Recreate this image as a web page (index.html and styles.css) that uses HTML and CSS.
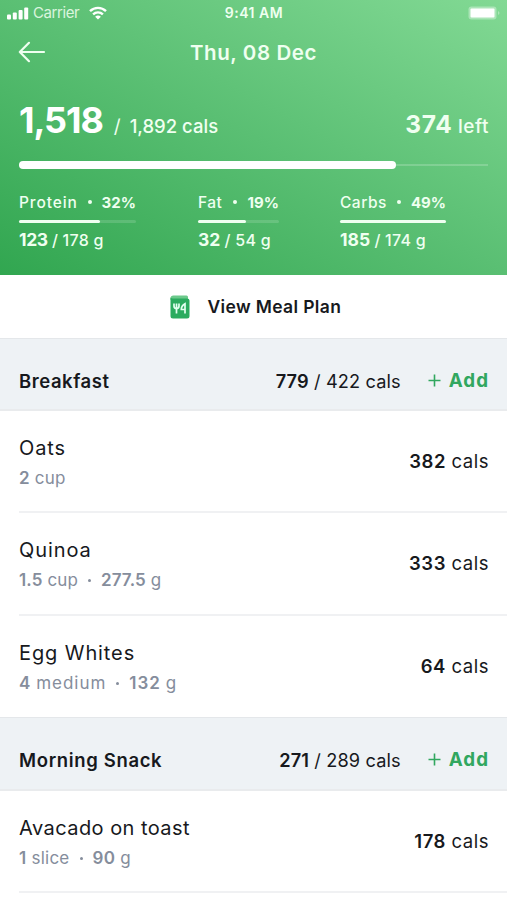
FILE: index.html
```html
<!DOCTYPE html>
<html lang="en">
<head>
<meta charset="utf-8">
<title>Food Diary</title>
<link rel="stylesheet" href="styles.css">
</head>
<body>
<header class="summary">
  <div class="status">
    <div class="status-left">
      <svg class="signal" width="22" height="14" viewBox="0 0 22 14"><rect x="0" y="8.5" width="4" height="5" rx="1"/><rect x="5.8" y="6.5" width="4" height="7" rx="1"/><rect x="11.6" y="4" width="4" height="9.5" rx="1"/><rect x="17.2" y="1.5" width="4" height="12" rx="1"/></svg>
      <span class="carrier">Carrier</span>
      <svg class="wifi" width="20" height="14" viewBox="0 0 20 14"><path d="M2 5.2C6.5.8 13.500.8 18 5.200" /><path d="M5.100 8.400C7.900 5.700 12.100 5.700 14.900 8.400"/><path class="wifi-dot" d="M10 13.500L7.100 10.700Q10 8.400 12.900 10.700Z"/></svg>
    </div>
    <span class="clock">9:41 AM</span>
    <svg class="battery" width="33" height="14" viewBox="0 0 33 14"><rect class="case" x="0.500" y="0.500" width="28" height="13" rx="3"/><rect class="charge" x="2.500" y="2.500" width="24" height="9" rx="1"/><path class="case" d="M30 5Q33 7 30 9Z"/></svg>
  </div>
  <div class="nav">
    <svg class="back" width="28" height="22" viewBox="0 0 28 22"><path d="M26 11H1.800M11 1.800L1.800 11L11 20.200"/></svg>
    <h1>Thu, 08 Dec</h1>
    <span class="nav-space"></span>
  </div>
  <div class="totals">
    <div class="eaten"><b>1,518</b><i>/</i><span>1,892 cals</span></div>
    <div class="left"><b>374</b> <span>left</span></div>
  </div>
  <div class="progress"><div class="progress-fill"></div></div>
  <div class="macros">
    <div class="macro protein">
      <div class="label"><span>Protein</span><i></i><b>32%</b></div>
      <div class="meter"><div></div></div>
      <div class="amount"><b>123</b> <span>/ 178 g</span></div>
    </div>
    <div class="macro fat">
      <div class="label"><span>Fat</span><i></i><b>19%</b></div>
      <div class="meter"><div></div></div>
      <div class="amount"><b>32</b> <span>/ 54 g</span></div>
    </div>
    <div class="macro carbs">
      <div class="label"><span>Carbs</span><i></i><b>49%</b></div>
      <div class="meter"><div></div></div>
      <div class="amount"><b>185</b> <span>/ 174 g</span></div>
    </div>
  </div>
</header>
<a class="plan">
  <svg width="20" height="24" viewBox="0 0 20 24"><path class="pages" d="M3.500.500H16.500Q18 .500 18 2V5H.500V3.500Q.500.500 3.500.500Z"/><path class="cover" d="M.500 2.500Q1 3.500 3 3.500H17Q19.500 3.500 19.500 5.500V21Q19.500 23.500 17 23.500H3Q.500 23.500.500 21Z"/><path class="cutlery" d="M4 8.500V11Q4 13.500 6.500 13.500Q9 13.500 9 11V8.500M6.500 8.500V18.500M15 18.500V8.800Q11.300 11 11.300 14.500H15"/></svg>
  <span>View Meal Plan</span>
</a>
<main>
  <section>
    <div class="meal-head"><h2>Breakfast</h2><div class="meal-total"><b>779</b> / 422 cals</div><a class="add"><svg width="13" height="13" viewBox="0 0 13 13"><path d="M6.500.500V12.500M.500 6.500H12.500"/></svg><span>Add</span></a></div>
    <div class="food"><div><h3 class="wide">Oats</h3><p><b>2</b> cup</p></div><div class="cals"><b>382</b> cals</div></div>
    <div class="food"><div><h3 class="wide">Quinoa</h3><p class="tight"><b>1.5</b> cup<i></i><b>277.5</b> g</p></div><div class="cals"><b>333</b> cals</div></div>
    <div class="food last"><div><h3 class="wide">Egg Whites</h3><p class="wide"><b>4</b> medium<i></i><b>132</b> g</p></div><div class="cals"><b>64</b> cals</div></div>
  </section>
  <section>
    <div class="meal-head"><h2 class="snack">Morning Snack</h2><div class="meal-total"><b>271</b> / 289 cals</div><a class="add"><svg width="13" height="13" viewBox="0 0 13 13"><path d="M6.500.500V12.500M.500 6.500H12.500"/></svg><span>Add</span></a></div>
    <div class="food"><div><h3>Avacado on toast</h3><p><b>1</b> slice<i></i><b>90</b> g</p></div><div class="cals"><b>178</b> cals</div></div>
  </section>
</main>
</body>
</html>
```
FILE: styles.css
```css
* { box-sizing: border-box; margin: 0; padding: 0; }
body { width: 507px; height: 900px; overflow: hidden; background: #fff; color: #17191d; font-family: Inter, "Open Sans", sans-serif; }
svg { display: block; flex: none; }
i { font-style: normal; }
b { font-weight: 700; }

.summary { height: 275px; background: linear-gradient(28deg, #31a650 0%, #5abf73 50%, #82d994 100%); color: #effff0; }
.status { display: grid; grid-template-columns: 1fr auto 1fr; align-items: center; height: 26px; padding: 0 6px 0 7px; }
.status-left { display: flex; align-items: center; }
.signal { fill: #fff; margin-right: 4px; }
.carrier { font: 400 15px/20px Inter, sans-serif; letter-spacing: -0.4px; opacity: .85; width: 47px; }
.wifi { margin-left: 8px; fill: none; stroke: #fff; stroke-width: 2.4; }
.wifi-dot { fill: #fff; stroke: none; }
.clock { font: 600 14px/20px Inter, sans-serif; letter-spacing: .5px; }
.battery { justify-self: end; }
.case { fill: #fff; opacity: .35; }
.charge { fill: #fff; }

.nav { display: grid; grid-template-columns: 28px 1fr 28px; align-items: center; height: 52px; padding: 0 18px; }
.back { fill: none; stroke: #effff0; stroke-width: 2.2; stroke-linecap: round; stroke-linejoin: round; }
h1 { font-size: 20.5px; font-weight: 600; text-align: center; letter-spacing: .6px; }

.totals { display: flex; justify-content: space-between; align-items: baseline; height: 82px; padding: 20px 18px 0 19px; line-height: 44px; white-space: nowrap; }
.eaten { display: flex; align-items: baseline; }
.eaten b { font-size: 36px; letter-spacing: -1.1px; color: #fff; }
.eaten i { font-size: 19px; margin: 0 9px 0 11px; }
.eaten span { font-size: 18.5px; font-weight: 500; }
.left { font-size: 19px; font-weight: 500; letter-spacing: .5px; }
.left b { font-size: 24.5px; letter-spacing: .7px; }

.progress { display: flex; align-items: center; height: 9px; margin: 0 19px; background: linear-gradient(#ffffff30, #ffffff30) center / 100% 2px no-repeat; }
.progress-fill { width: 377px; height: 8px; border-radius: 4px; background: #fff; }

.macros { display: flex; padding: 23px 19px 0; white-space: nowrap; }
.protein { width: 117px; margin-right: 62px; }
.fat { width: 81px; margin-right: 61px; }
.carbs { width: 106px; }
.label { display: flex; align-items: center; justify-content: space-between; height: 20px; font-size: 15.5px; font-weight: 500; }
.label span { letter-spacing: .5px; }
.protein .label span { letter-spacing: .9px; }
.label b { font-size: 15px; }
.label i { width: 4px; height: 4px; border-radius: 50%; background: currentColor; }
.meter { height: 3px; margin: 8px 0 5px; background: #ffffff25; border-radius: 2px; }
.meter div { height: 3px; border-radius: 2px; background: #effff0; width: 100%; }
.protein .meter div { width: 81px; }
.fat .meter div { width: 48px; }
.amount { font-size: 16px; font-weight: 500; line-height: 24px; }
.amount span { letter-spacing: .25px; }
.amount b { font-size: 17.5px; }
.protein .amount b { letter-spacing: -.4px; }

.plan { display: flex; align-items: center; height: 63px; padding-left: 170px; gap: 17.5px; font-size: 17.5px; font-weight: 600; letter-spacing: .35px; }
.plan span { white-space: nowrap; }
.pages { fill: #6cc98b; }
.cover { fill: #2bab5f; }
.cutlery { fill: none; stroke: #e3fff0; stroke-width: 1.7; }

.meal-head { display: flex; align-items: center; height: 73px; padding: 13px 19px 0; background: #eef2f5; border-top: 1px solid #e4e7ea; border-bottom: 2px solid #e9ebed; white-space: nowrap; }
h2 { flex: 1; font-size: 18.5px; font-weight: 600; line-height: 24px; letter-spacing: .55px; }
.snack { letter-spacing: .65px; }
.meal-total { font-size: 18.2px; line-height: 24px; letter-spacing: .12px; }
.meal-total b, .cals b { font-weight: 600; }
.add { display: flex; align-items: center; gap: 7.5px; margin: 0 -1px 0 27.5px; color: #31a75f; font-size: 18.8px; font-weight: 700; line-height: 24px; letter-spacing: 1px; }
.add svg { fill: none; stroke: currentColor; stroke-width: 1.6; }
.add span { padding-top: 1px; }

.food { display: flex; align-items: center; justify-content: space-between; height: 102.3px; margin-left: 19px; padding-right: 18px; border-bottom: 2px solid #f0f1f3; white-space: nowrap; }
.last { height: 101.4px; border-bottom: 0; }
section + section .meal-head { height: 74px; }
h3 { padding-top: 7px; font-size: 20px; font-weight: 400; line-height: 27px; letter-spacing: .45px; }
h3.wide { letter-spacing: .9px; }
.food p { display: flex; align-items: center; gap: 5px; color: #858d9c; font-size: 17px; line-height: 33px; letter-spacing: .25px; }
.food p.tight { letter-spacing: .1px; }
.food p.wide { letter-spacing: .95px; }
.food p b { font-weight: 600; }
.food p i { width: 3px; height: 3px; margin: 0 5px; border-radius: 50%; background: currentColor; }
.cals { font-size: 18.5px; letter-spacing: .5px; }
```
